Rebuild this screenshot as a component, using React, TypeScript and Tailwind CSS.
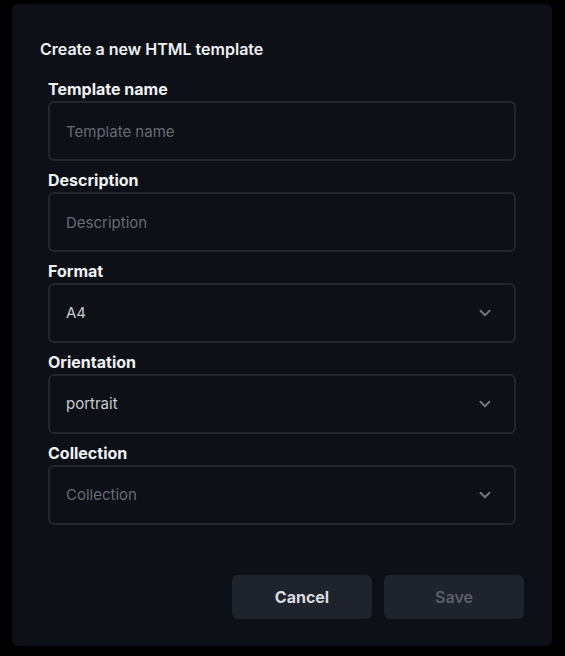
import React from 'react';

const Chevron = () => (
  <svg width="18" height="18" viewBox="0 0 24 24" fill="none" stroke="#71757e" strokeWidth="2.6" strokeLinecap="round" strokeLinejoin="round">
    <path d="m6 9 6 6 6-6" />
  </svg>
);

const Field = ({ label, placeholder }: { label: string; placeholder: string }) => (
  <div className="flex flex-col">
    <label className="text-[16px] leading-[22px] font-bold text-[#f1f2f4] mb-[1px]">{label}</label>
    <input
      placeholder={placeholder}
      className="h-[60px] w-full rounded-md border-2 border-[#23262e] bg-[#0d1017] px-4 text-[15px] text-[#c9ccd2] placeholder:text-[#676b74] outline-none"
    />
  </div>
);

const SelectField = ({ label, value, placeholder }: { label: string; value?: string; placeholder?: string }) => (
  <div className="flex flex-col">
    <label className="text-[16px] leading-[22px] font-bold text-[#f1f2f4] mb-[1px]">{label}</label>
    <div className="h-[60px] w-full rounded-md border-2 border-[#23262e] bg-[#0d1017] pl-4 pr-5 flex items-center justify-between">
      <span className={`text-[15px] ${value ? 'text-[#c9ccd2]' : 'text-[#676b74]'}`}>{value ?? placeholder}</span>
      <Chevron />
    </div>
  </div>
);

export default function App() {
  return (
    <div className="min-h-[656px] bg-black pt-1 px-3 pb-[10px]" style={{ fontFamily: 'Inter, "Noto Sans", sans-serif' }}>
      <div className="w-[540px] h-[642px] rounded-md bg-[#0d1017] px-7 pt-[35px] pb-[27px] flex flex-col">
        <h2 className="text-[16px] leading-5 font-semibold text-[#eef0f3] mb-[19px]">Create a new HTML template</h2>
        <div className="flex flex-col gap-[8px] px-2">
          <Field label="Template name" placeholder="Template name" />
          <Field label="Description" placeholder="Description" />
          <SelectField label="Format" value="A4" />
          <SelectField label="Orientation" value="portrait" />
          <SelectField label="Collection" placeholder="Collection" />
        </div>
        <div className="mt-auto flex justify-end gap-3">
          <button className="w-[140px] h-[44px] rounded-md bg-[#1f232b] text-[16px] font-bold text-[#d9dce1]">Cancel</button>
          <button className="w-[140px] h-[44px] rounded-md bg-[#1f232b] text-[16px] font-semibold text-[#5b5f68]" disabled>Save</button>
        </div>
      </div>
    </div>
  );
}
